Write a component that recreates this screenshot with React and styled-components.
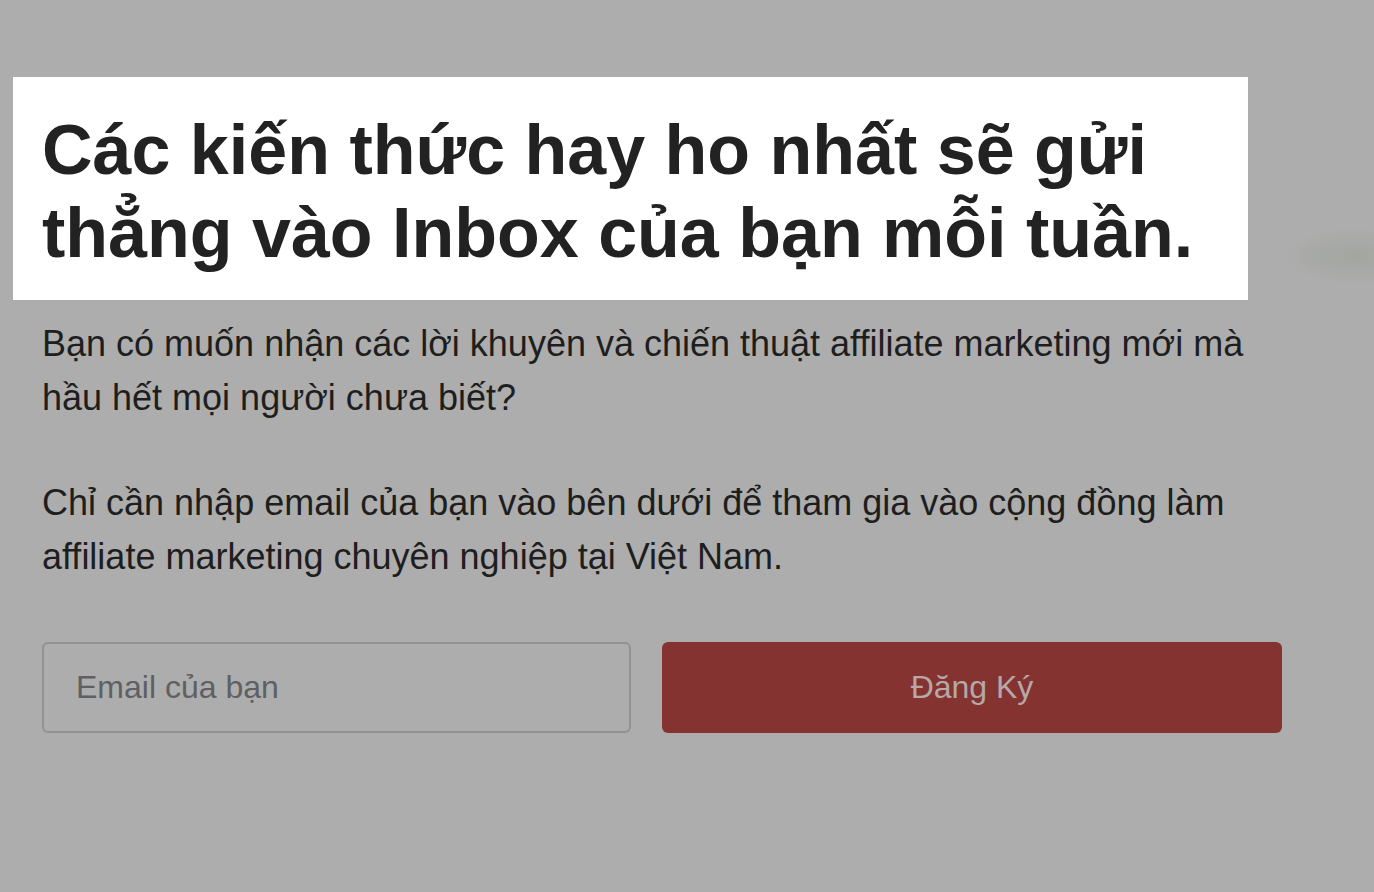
import React from "react";
import styled, { createGlobalStyle } from "styled-components";

const Global = createGlobalStyle`
  html, body { margin: 0; padding: 0; background: #adadad; }
  body { font-family: "Liberation Sans", Arial, sans-serif; }
  * { box-sizing: border-box; }
`;

const Page = styled.div`
  position: relative;
  min-height: 892px;
  background: #adadad;
  padding: 77px 0 0 42px;
  overflow: hidden;
`;

const Column = styled.div`
  width: 1240px;
`;

const Highlight = styled.div`
  background: #ffffff;
  margin-left: -29px;
  width: 1235px;
  padding: 32px 16px 25px 29px;
`;

const Title = styled.h2`
  margin: 0;
  font-size: 70px;
  line-height: 83px;
  font-weight: 700;
  color: #222222;
`;

const Body = styled.div`
  padding-top: 17px;
`;

const Para = styled.p`
  margin: 0 0 ${(p) => p.$gap || 0}px;
  font-size: 36px;
  line-height: 54px;
  color: #1e1e1e;
`;

const Form = styled.form`
  display: grid;
  grid-template-columns: 589px 620px;
  column-gap: 31px;
  margin-top: 58px;
`;

const Input = styled.input`
  height: 91px;
  border: 2px solid #929292;
  border-radius: 6px;
  background: transparent;
  padding: 0 32px;
  font-family: "Liberation Sans", Arial, sans-serif;
  font-size: 32px;
  color: #333;
  outline: none;
  &::placeholder { color: #5f6063; }
`;

const Button = styled.button`
  height: 91px;
  border: none;
  border-radius: 6px;
  background: #843331;
  color: #b5a8a7;
  font-family: "Liberation Sans", Arial, sans-serif;
  font-size: 32px;
  cursor: pointer;
`;

const Smudge = styled.div`
  position: absolute;
  left: 1284px;
  top: 228px;
  width: 90px;
  height: 56px;
  background: radial-gradient(ellipse at 80% 50%, rgba(160,164,158,0.9) 0%, rgba(166,168,164,0.6) 45%, rgba(173,173,173,0) 75%);
`;

export default function App() {
  return (
    <>
      <Global />
      <Page>
        <Column>
          <Highlight>
            <Title>Các kiến thức hay ho nhất sẽ gửi thẳng vào Inbox của bạn mỗi tuần.</Title>
          </Highlight>
          <Body>
            <Para $gap={51}>
              Bạn có muốn nhận các lời khuyên và chiến thuật affiliate marketing mới mà hầu hết mọi người chưa biết?
            </Para>
            <Para>
              Chỉ cần nhập email của bạn vào bên dưới để tham gia vào cộng đồng làm affiliate marketing chuyên nghiệp tại Việt Nam.
            </Para>
          </Body>
          <Form onSubmit={(e) => e.preventDefault()}>
            <Input type="email" placeholder="Email của bạn" />
            <Button type="submit">Đăng Ký</Button>
          </Form>
        </Column>
        <Smudge />
      </Page>
    </>
  );
}
